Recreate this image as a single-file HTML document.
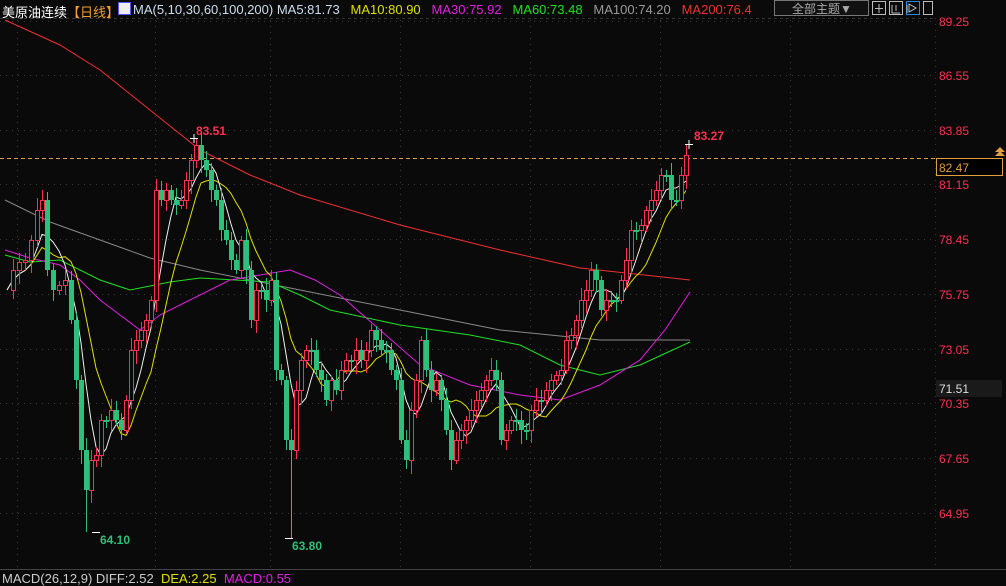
<!DOCTYPE html>
<html><head><meta charset="utf-8"><style>
html,body{margin:0;padding:0;background:#0a0a0a;width:1006px;height:584px;overflow:hidden;font-family:"Liberation Sans","Noto Sans CJK SC",sans-serif}
.t{position:absolute;font-size:12px;white-space:nowrap}
</style></head><body>
<svg id="s" width="1006" height="584" style="position:absolute;left:0;top:0" xmlns="http://www.w3.org/2000/svg">
<rect width="1006" height="584" fill="#0a0a0a"/>
<line x1="0" y1="18.5" x2="935" y2="18.5" stroke="#333" stroke-dasharray="3,3"/>
<line x1="935.5" y1="18" x2="935.5" y2="568" stroke="#333" stroke-dasharray="1,5"/>
<line x1="0" y1="569.5" x2="1006" y2="569.5" stroke="#444"/>
<g id="grid" stroke="#3a3a3a" stroke-dasharray="1,5"></g>
<line x1="0" y1="158.5" x2="935" y2="158.5" stroke="#e0a040" stroke-dasharray="4,3"/>
<g id="ma" fill="none" stroke-width="1"></g>
<g id="c"></g>
<g font-size="12" font-weight="bold">
<text x="196" y="135" fill="#ff3050">83.51</text>
<text x="694" y="140" fill="#ff3050">83.27</text>
<text x="100" y="544" fill="#2ec07a">64.10</text>
<text x="292" y="550" fill="#2ec07a">63.80</text>
</g>
<g stroke="#fff"><line x1="190" y1="138.5" x2="198" y2="138.5"/><line x1="194" y1="134" x2="194" y2="143"/>
<line x1="685" y1="144.5" x2="693" y2="144.5"/><line x1="689" y1="140" x2="689" y2="149"/>
<line x1="92" y1="532.5" x2="100" y2="532.5"/><line x1="285" y1="538.5" x2="293" y2="538.5"/></g>
<g font-size="12" fill="#ff3050" id="ax"></g>
<rect x="936.5" y="158.5" width="66" height="17" fill="#000" stroke="#e0a040"/>
<text x="939" y="172" font-size="12" fill="#e0a040">82.47</text>
<polygon points="995,152 1000,147 1005,152" fill="#e0a040"/><polygon points="995,156 1000,151 1005,156" fill="#e0a040"/>
<rect x="936" y="380" width="66" height="17" fill="#1a1a1a"/>
<text x="939" y="393" font-size="12" fill="#ddd">71.51</text>
<rect x="774.5" y="0.5" width="94" height="15" fill="#111" stroke="#777"/>
<text x="792" y="13" font-size="12" fill="#aaa">全部主题▼</text>
<g fill="none" stroke="#bbb"><rect x="872.5" y="1.5" width="13" height="13"/><rect x="889.5" y="1.5" width="13" height="13"/><rect x="906.5" y="1.5" width="13" height="13" stroke="#2a8ae0"/><rect x="923.5" y="1.5" width="9" height="13"/>
<path d="M879 4v9M875 8.5h8M892 5v8h8M896 5v6M907 5l0 8M909 4l7 4-7 4z"/></g>
</svg>
<div class="t" style="left:2px;top:2px;color:#fff;font-size:13px">美原油连续<span style="color:#f0a030">【日线】</span></div>
<div class="t" style="left:118px;top:2px;width:11px;height:11px;background:#eee;border:1px solid #55f"></div>
<div class="t" style="left:133px;top:2px;color:#cde;font-size:13px">MA(5,10,30,60,100,200) <span>MA5:81.73</span>&nbsp;&nbsp; <span style="color:#e0e000">MA10:80.90</span>&nbsp;&nbsp; <span style="color:#e020e0">MA30:75.92</span>&nbsp;&nbsp; <span style="color:#20e020">MA60:73.48</span>&nbsp;&nbsp; <span style="color:#999">MA100:74.20</span>&nbsp;&nbsp; <span style="color:#f03030">MA200:76.4</span></div>
<div class="t" style="left:2px;top:571px;color:#ccc;font-size:13px">MACD(26,12,9) DIFF:2.52&nbsp; <span style="color:#e0e000">DEA:2.25</span>&nbsp; <span style="color:#e020e0">MACD:0.55</span></div>
<script>
(function(){
var N='http://www.w3.org/2000/svg';
function el(p,t,a){var e=document.createElementNS(N,t);for(var k in a)e.setAttribute(k,a[k]);p.appendChild(e);return e;}
var labs=[["89.25",21],["86.55",75],["83.85",130],["81.15",184],["78.45",239],["75.75",294],["73.05",349],["70.35",403],["67.65",458],["64.95",513]];
var g=document.getElementById('grid'),ax=document.getElementById('ax');
labs.forEach(function(l){el(g,'line',{x1:0,x2:935,y1:l[1]+.5,y2:l[1]+.5});var t=el(ax,'text',{x:939,y:l[1]+5});t.textContent=l[0];});
[17,155,270,400,530,660,790].forEach(function(x){el(g,'line',{x1:x+.5,x2:x+.5,y1:20,y2:568});});
var P=[[7,290],[13,270],[19,262],[25,260],[31,240],[37,210],[42,200],[47,270],[53,290],[59,285],[65,280],[71,320],[76,380],[81,450],[86,490],[91,460],[96,455],[101,420],[106,420],[111,410],[116,420],[121,430],[126,400],[131,350],[136,340],[141,330],[146,320],[151,300],[156,190],[161,200],[166,190],[171,200],[176,205],[181,200],[186,180],[191,160],[196,145],[201,160],[206,170],[211,190],[216,200],[221,230],[226,240],[231,260],[236,270],[241,240],[246,270],[251,320],[256,290],[261,290],[266,300],[271,280],[276,370],[281,380],[286,440],[291,450],[296,390],[301,360],[306,350],[311,350],[316,370],[321,380],[326,400],[331,380],[336,390],[341,370],[346,360],[351,360],[356,350],[361,360],[366,350],[371,330],[376,340],[381,350],[386,350],[391,370],[396,380],[401,440],[406,460],[411,410],[416,380],[421,340],[426,370],[431,390],[436,380],[441,400],[446,430],[451,460],[456,440],[461,430],[466,420],[471,410],[476,400],[481,390],[486,380],[491,370],[496,380],[501,440],[506,430],[511,420],[516,420],[521,430],[526,430],[531,410],[536,400],[541,400],[546,390],[551,380],[556,375],[561,370],[566,340],[571,335],[576,320],[581,300],[586,290],[591,270],[596,280],[601,310],[606,300],[611,300],[616,300],[621,280],[626,260],[631,230],[636,230],[641,225],[646,210],[651,200],[656,190],[661,175],[666,175],[671,200],[676,200],[681,175],[686,155]];
var cg=document.getElementById('c');
for(var i=1;i<P.length;i++){var x=P[i][0],o=P[i-1][1],c=P[i][1],up=c<o;var t0=Math.min(o,c),b0=Math.max(o,c);if(b0-t0<2)b0=t0+2;
var hi=t0-4-(i*7%9),lo=b0+4+(i*5%11);if(x==86)lo=532;if(x==291)lo=538;if(x==196)hi=138;if(x==686)hi=144;
var col=up?'#ff3050':'#2ec07a';
el(cg,'line',{x1:x+.5,x2:x+.5,y1:hi,y2:lo,stroke:col});
if(up)el(cg,'rect',{x:x-1.5,y:t0+.5,width:4,height:b0-t0,fill:'#0a0a0a',stroke:col});
else el(cg,'rect',{x:x-2,y:t0,width:5,height:b0-t0,fill:col});}
var ma=document.getElementById('ma');
function pl(pts,c){el(ma,'polyline',{points:pts.map(function(p){return p.join(',')}).join(' '),stroke:c});}
pl([[5,20],[60,45],[100,70],[150,110],[200,150],[250,175],[300,195],[400,225],[500,250],[580,268],[690,280]],'#f03030');
pl([[5,200],[50,222],[100,240],[150,258],[200,270],[300,290],[400,310],[500,330],[600,340],[690,340]],'#888');
pl([[5,255],[30,262],[60,260],[100,280],[130,290],[170,282],[200,278],[270,282],[300,295],[330,310],[400,325],[470,335],[520,345],[560,365],[600,375],[640,365],[690,342]],'#20e020');
pl([[5,250],[30,258],[60,265],[80,280],[100,300],[140,330],[160,315],[180,305],[230,280],[290,270],[315,280],[340,295],[380,330],[420,365],[470,385],[520,395],[560,400],[600,385],[640,360],[665,330],[690,292]],'#e020e0');
function mav(n,c){var pts=[];for(var i=0;i<P.length;i++){var s=0,k=0;for(var j=Math.max(0,i-n+1);j<=i;j++){s+=P[j][1];k++;}pts.push([P[i][0],(s/k).toFixed(1)]);}pl(pts,c);}
mav(10,'#e0e000');mav(5,'#eeeeee');
})();
</script>
</body></html>
